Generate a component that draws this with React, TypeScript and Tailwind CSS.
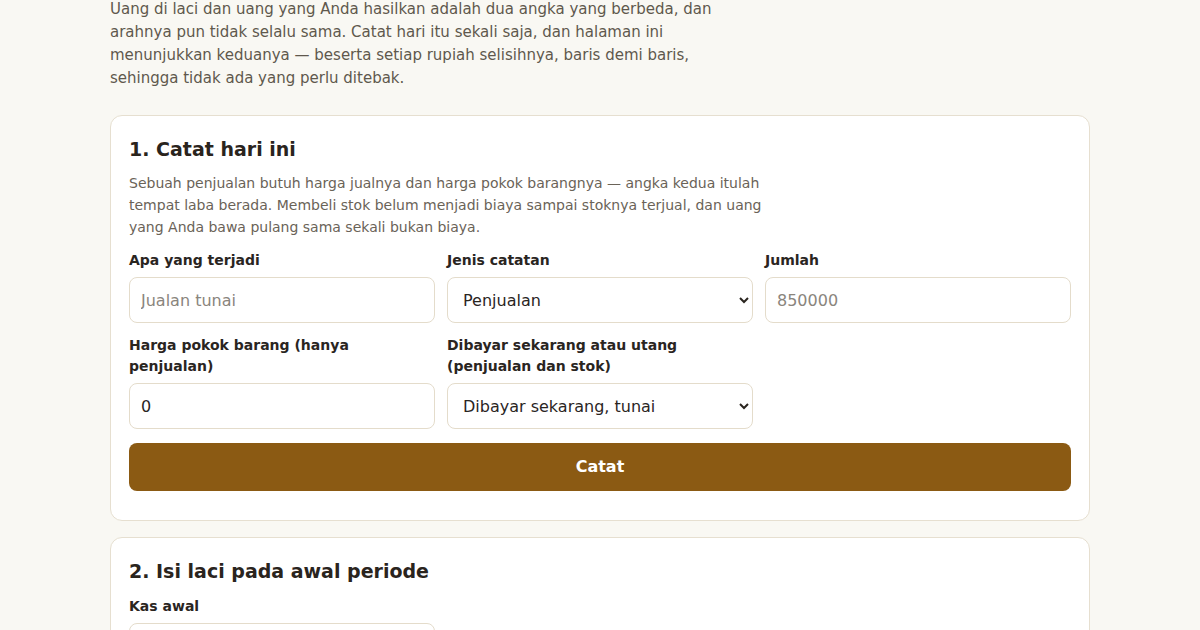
import React from "react";

const inputCls =
  "h-[46px] w-full rounded-lg border border-[#e4dccb] bg-white px-[11px] text-base text-[#2a251f] outline-none placeholder:text-[#8a857d]";

function Field({ label, children }: { label: string; children: React.ReactNode }) {
  return (
    <label className="flex flex-col gap-[6px]">
      <span className="text-sm font-bold leading-[21px] text-[#2a251f]">{label}</span>
      {children}
    </label>
  );
}

export default function App() {
  return (
    <div
      className="min-h-screen bg-[#f9f8f3] text-[#2a251f]"
      style={{ fontFamily: '"DejaVu Sans", "Noto Sans", sans-serif' }}
    >
      <div className="mx-auto w-[980px] pb-10">
        <p className="mt-[-2px] max-w-[640px] text-[15px] leading-[23px] text-[#5f584d]">
          Uang di laci dan uang yang Anda hasilkan adalah dua angka yang berbeda, dan arahnya pun
          tidak selalu sama. Catat hari itu sekali saja, dan halaman ini menunjukkan keduanya —
          beserta setiap rupiah selisihnya, baris demi baris, sehingga tidak ada yang perlu
          ditebak.
        </p>

        <section className="mt-[25px] rounded-xl border border-[#e6dfd0] bg-white px-[18px] pt-[21px] pb-[29px]">
          <h2 className="text-[19px] font-bold leading-6 text-[#2a241d]">1. Catat hari ini</h2>
          <p className="mt-[11px] max-w-[640px] text-sm leading-[22px] text-[#6a6358]">
            Sebuah penjualan butuh harga jualnya dan harga pokok barangnya — angka kedua itulah
            tempat laba berada. Membeli stok belum menjadi biaya sampai stoknya terjual, dan uang
            yang Anda bawa pulang sama sekali bukan biaya.
          </p>

          <div className="mt-3 grid grid-cols-3 items-end gap-x-3 gap-y-3">
            <Field label="Apa yang terjadi">
              <input className={inputCls} placeholder="Jualan tunai" />
            </Field>
            <Field label="Jenis catatan">
              <select className={inputCls} defaultValue="Penjualan">
                <option>Penjualan</option>
                <option>Pembelian stok</option>
                <option>Biaya</option>
              </select>
            </Field>
            <Field label="Jumlah">
              <input className={inputCls} placeholder="850000" />
            </Field>
            <Field label="Harga pokok barang (hanya penjualan)">
              <input className={inputCls} defaultValue="0" />
            </Field>
            <Field label="Dibayar sekarang atau utang (penjualan dan stok)">
              <select className={inputCls} defaultValue="Dibayar sekarang, tunai">
                <option>Dibayar sekarang, tunai</option>
                <option>Utang</option>
              </select>
            </Field>
          </div>

          <button className="mt-[14px] h-12 w-full rounded-lg bg-[#8b5a13] text-base font-bold text-white">
            Catat
          </button>
        </section>

        <section className="mt-4 rounded-xl border border-[#e6dfd0] bg-white px-[18px] pt-[21px] pb-[29px]">
          <h2 className="text-[19px] font-bold leading-6 text-[#2a241d]">
            2. Isi laci pada awal periode
          </h2>
          <div className="mt-[13px] grid grid-cols-3 gap-3">
            <Field label="Kas awal">
              <input className={inputCls} defaultValue="0" />
            </Field>
          </div>
        </section>
      </div>
    </div>
  );
}
